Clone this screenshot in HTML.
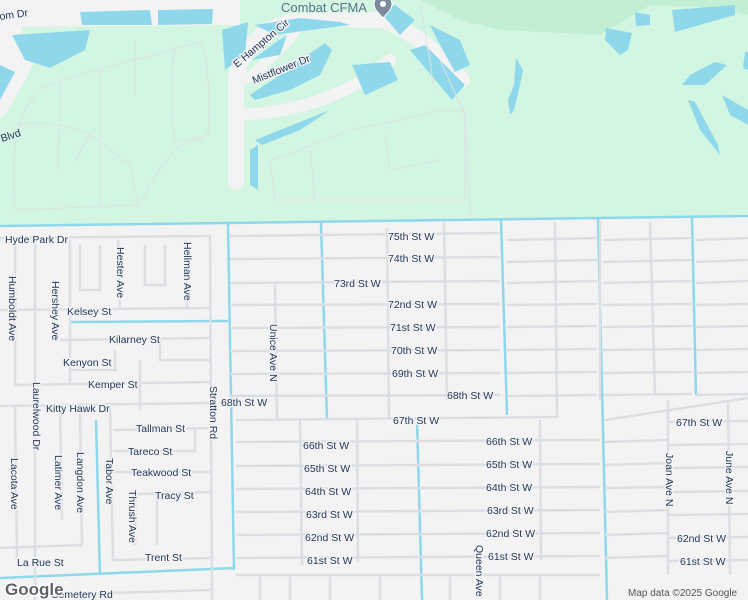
<!DOCTYPE html>
<html><head><meta charset="utf-8"><style>
html,body{margin:0;padding:0;width:748px;height:600px;overflow:hidden;background:#f4f3f4}
svg{display:block}
text{font-family:"Liberation Sans",sans-serif;font-size:10.5px;fill:#22395a;paint-order:stroke;stroke:#f4f3f4;stroke-width:3px;stroke-linejoin:round}
</style></head><body>
<svg width="748" height="600" viewBox="0 0 748 600" xmlns="http://www.w3.org/2000/svg">
<rect width="748" height="600" fill="#f4f3f4"/>
<polygon points="0,0 748,0 748,216 0,226" fill="#d2f6e2"/>
<path d="M420,0 L748,0 L748,15 L720,8 L650,5 L600,35 L500,30 L460,20 Z" fill="#c2efd4"/>
<path d="M0,0 L240,0 L240,25 L0,27 Z" fill="#f4f3f4"/>
<path d="M80,12 L150,10 L152,25 L82,25 Z M158,10 L213,9 L212,24 L158,25 Z" fill="#8fd8ec"/>
<path d="M0,27 L20,25 L35,60 L25,80 L5,115 L0,118 Z" fill="#f4f3f4"/>
<path d="M0,65 L15,72 L0,100 Z" fill="#8fd8ec"/>
<path d="M12,35 L90,30 L85,50 L50,68 L25,60 Z" fill="#8fd8ec"/>
<!-- developed gray area -->
<g fill="none" stroke="#f4f3f4" stroke-linecap="round" stroke-linejoin="round">
<path d="M236,182 L236,80 C240,45 270,22 310,18 L380,20 C410,28 440,55 462,80" stroke-width="16"/>
<path d="M240,115 C300,112 350,95 390,60" stroke-width="12"/>
<path d="M245,80 C270,60 290,40 300,25" stroke-width="10"/>
</g>
<path d="M255,25 L300,18 L340,22 L350,25 L310,30 L275,35 Z" fill="#8fd8ec"/>
<path d="M222,30 L248,22 L245,55 L225,70 Z" fill="#8fd8ec"/>
<path d="M250,95 L280,75 L300,60 L325,43 L332,50 L320,75 L290,90 L255,100 Z" fill="#8fd8ec"/>
<path d="M252,60 L272,45 L287,35 L280,55 Z" fill="#8fd8ec"/>
<path d="M352,65 L390,62 L398,80 L365,95 Z" fill="#8fd8ec"/>
<path d="M410,50 L425,45 L465,85 L452,100 Z" fill="#8fd8ec"/>
<path d="M430,25 L460,40 L470,65 L455,72 L440,45 Z" fill="#8fd8ec"/>
<path d="M380,12 L395,5 L415,20 L400,35 Z" fill="#8fd8ec"/>
<path d="M516,58 L523,70 L520,85 L514,110 L510,115 L508,100 L514,85 Z" fill="#8fd8ec"/>
<path d="M606,28 L632,33 L628,50 L620,55 L605,40 Z" fill="#8fd8ec"/>
<path d="M635,12 L650,15 L650,25 L636,26 Z" fill="#8fd8ec"/>
<path d="M672,10 L735,5 L735,15 L675,32 Z" fill="#8fd8ec"/>
<path d="M690,75 L715,62 L727,65 L705,85 L682,85 Z" fill="#8fd8ec"/>
<path d="M688,100 L700,130 L720,155 L718,145 L695,102 Z" fill="#8fd8ec"/>
<path d="M722,95 L748,110 L748,125 L730,115 Z" fill="#8fd8ec"/>
<path d="M745,52 L748,52 L748,70 L743,68 Z" fill="#8fd8ec"/>
<path d="M250,150 L258,145 L258,190 L250,185 Z" fill="#8fd8ec"/>
<path d="M255,140 L330,110 L300,130 L262,145 Z" fill="#8fd8ec"/>
<g fill="none" stroke="#dfe1e5" stroke-width="1">
<path d="M15,210 C10,150 15,95 60,80 L200,42 C210,60 210,110 208,135 C190,140 170,140 140,205 L15,210"/>
<path d="M60,80 L58,170 M100,70 L100,205 M135,42 L135,95 M175,45 C170,80 170,120 175,140 L205,140"/>
<path d="M15,125 C40,120 70,125 90,135 L75,160 M90,135 L130,165 L138,205"/>
<path d="M270,160 L300,150 L350,130 L400,120 L440,110 L465,110 L465,200 L275,200 Z M310,150 L315,200 M385,135 L390,170 L440,160"/>
<path d="M420,5 L430,60 L434,90 M440,60 L465,115 L470,215"/>
</g>
<g fill="none" stroke="#8fd8ec" stroke-width="2.5">
<path d="M0,226 L748,216"/>
<path d="M228,224 L234,570"/>
<path d="M321,223 L327,420"/>
<path d="M501,220 L507,415"/>
<path d="M598,218 L607,600"/>
<path d="M692,218 L696,395"/>
<path d="M70,322 L228,321"/>
<path d="M96,420 L100,575"/>
<path d="M0,578 L234,568"/>
<path d="M417,420 L422,600"/>
</g>
<g fill="none" stroke="#dbdfe4" stroke-width="2.5">
<path d="M0,238 L210,236 L212,600"/>
<path d="M15,240 L15,385 L210,382"/>
<path d="M35,240 L35,600 M70,240 L70,385"/>
<path d="M0,310 L210,308"/>
<path d="M60,340 L210,338 M160,340 L160,360 L210,360 M140,410 L140,360 M115,350 L115,370 L70,370"/>
<path d="M0,406 L210,403"/>
<path d="M15,406 L17,560 M60,406 L62,520 M80,410 L82,545 L0,548"/>
<path d="M110,408 L113,560 L210,558 M113,430 L210,428 M113,451 L195,451 L195,430 M113,472 L210,472 M135,494 L210,492 M135,494 L135,545 M157,494 L157,545"/>
<path d="M80,245 L80,290 L100,290 L100,245 M145,245 L145,285 L165,285 L165,245 M118,240 L120,310 M185,240 L187,310"/>
<path d="M40,595 L210,590"/>
<path d="M230,236 L500,233 M230,259 L500,257 M230,283 L500,281 M230,305 L500,304 M230,328 L500,327 M230,351 L500,350 M230,374 L500,373 M230,396 L500,395"/>
<path d="M236,420 L557,417 L555,222"/>
<path d="M236,442 L600,440 M236,466 L600,464 M236,489 L600,487 M236,512 L600,510 M236,535 L600,533 M236,558 L600,556"/>
<path d="M507,240 L597,238 M507,262 L597,260 M507,283 L597,281 M507,305 L597,304 M507,327 L597,326 M507,350 L597,349 M507,373 L597,372 M507,396 L597,395"/>
<path d="M275,285 L277,420 M387,228 L389,420 M444,222 L447,400 M300,420 L302,565 M357,420 L358,562 M540,420 L541,560"/>
<path d="M603,240 L692,238 M603,262 L692,260 M603,283 L692,281 M603,305 L692,304 M603,327 L692,326 M603,350 L692,349 M603,373 L692,372 M603,395 L692,394 M605,420 L748,398 M605,442 L668,440 M605,465 L668,463 M605,488 L668,487 M605,512 L668,510 M605,535 L668,533 M605,558 L668,556"/>
<path d="M650,222 L655,395 M600,222 L600,400"/>
<path d="M696,240 L748,238 M696,262 L748,260 M696,283 L748,281 M696,305 L748,304 M696,327 L748,326 M696,350 L748,349 M696,373 L748,372 M696,395 L748,394"/>
<path d="M668,400 L668,575 M728,400 L730,575 M668,422 L748,421 M668,445 L748,444 M668,468 L748,467 M668,492 L748,491 M668,515 L748,514 M668,538 L748,537 M668,561 L748,560"/>
<path d="M236,575 L600,575 M260,575 L260,600 M290,575 L290,600 M330,575 L330,600 M380,575 L380,600 M450,575 L450,600 M500,575 L500,600 M540,575 L540,600"/>
</g>
<text x="5" y="243">Hyde Park Dr</text>
<text x="67" y="315">Kelsey St</text>
<text x="109" y="343">Kilarney St</text>
<text x="63" y="366">Kenyon St</text>
<text x="88" y="388">Kemper St</text>
<text x="46" y="412">Kitty Hawk Dr</text>
<text x="136" y="432">Tallman St</text>
<text x="128" y="455">Tareco St</text>
<text x="131" y="476">Teakwood St</text>
<text x="155" y="499">Tracy St</text>
<text x="145" y="561">Trent St</text>
<text x="17" y="566">La Rue St</text>
<text x="51" y="598">Cemetery Rd</text>
<text x="221" y="406">68th St W</text>
<text x="334" y="287">73rd St W</text>
<text x="388" y="240">75th St W</text>
<text x="388" y="262">74th St W</text>
<text x="388" y="308">72nd St W</text>
<text x="390" y="331">71st St W</text>
<text x="391" y="354">70th St W</text>
<text x="392" y="377">69th St W</text>
<text x="447" y="399">68th St W</text>
<text x="393" y="424">67th St W</text>
<text x="486" y="445">66th St W</text>
<text x="486" y="468">65th St W</text>
<text x="486" y="491">64th St W</text>
<text x="487" y="514">63rd St W</text>
<text x="486" y="537">62nd St W</text>
<text x="488" y="560">61st St W</text>
<text x="303" y="449">66th St W</text>
<text x="304" y="472">65th St W</text>
<text x="305" y="495">64th St W</text>
<text x="306" y="518">63rd St W</text>
<text x="305" y="541">62nd St W</text>
<text x="307" y="564">61st St W</text>
<text x="676" y="426">67th St W</text>
<text x="677" y="542">62nd St W</text>
<text x="680" y="565">61st St W</text>
<g>
<text transform="translate(9,276) rotate(90)">Humboldt Ave</text>
<text transform="translate(52,281) rotate(90)">Hershey Ave</text>
<text transform="translate(117,247) rotate(90)">Hester Ave</text>
<text transform="translate(184,242) rotate(90)">Hellman Ave</text>
<text transform="translate(33,382) rotate(90)">Laurelwood Dr</text>
<text transform="translate(210,386) rotate(90)">Stratton Rd</text>
<text transform="translate(270,324) rotate(90)">Unice Ave N</text>
<text transform="translate(11,458) rotate(90)">Lacota Ave</text>
<text transform="translate(55,455) rotate(90)">Latimer Ave</text>
<text transform="translate(77,452) rotate(90)">Langdon Ave</text>
<text transform="translate(106,458) rotate(90)">Tabor Ave</text>
<text transform="translate(129,490) rotate(90)">Thrush Ave</text>
<text transform="translate(476,545) rotate(90)">Queen Ave</text>
<text transform="translate(666,453) rotate(90)">Joan Ave N</text>
<text transform="translate(726,451) rotate(90)">June Ave N</text>
</g>
<text transform="translate(2,142) rotate(-18)" style="stroke:#d2f6e2">Blvd</text>
<text transform="translate(0,20) rotate(-8)">om Dr</text>
<text transform="translate(237,68) rotate(-40)">E Hampton Cir</text>
<text transform="translate(254,84) rotate(-22)">Mistflower Dr</text>
<text x="281" y="12" style="font-size:13px;fill:#5d7189;stroke:#d2f6e2">Combat CFMA</text>
<path d="M374,4 a9,9 0 0 1 18,0 c0,6 -5,9 -9,14 c-4,-5 -9,-8 -9,-14z" fill="#7b8b9e" stroke="#fff" stroke-width="1"/>
<circle cx="383" cy="4" r="3" fill="#fff"/>
<text x="5" y="595" style="font-size:17px;font-weight:bold;fill:#5f6368;stroke:#fff;stroke-width:2.5px">Google</text>
<text x="628" y="596" style="font-size:10px;fill:#555;stroke:none">Map data ©2025 Google</text>
</svg>
</body></html>
